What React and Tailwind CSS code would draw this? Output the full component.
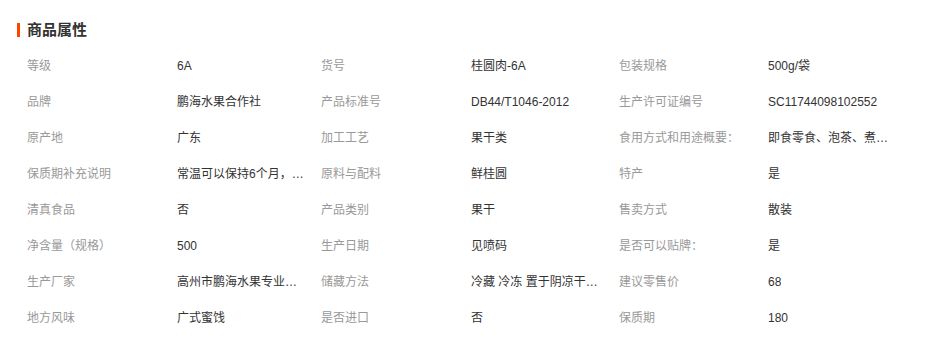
import React from 'react';

const rows = [
  ['等级', '6A', '货号', '桂圆肉-6A', '包装规格', '500g/袋'],
  ['品牌', '鹏海水果合作社', '产品标准号', 'DB44/T1046-2012', '生产许可证编号', 'SC11744098102552'],
  ['原产地', '广东', '加工工艺', '果干类', '食用方式和用途概要：', '即食零食、泡茶、煮粥、煲汤'],
  ['保质期补充说明', '常温可以保持6个月，冷藏可保持一年', '原料与配料', '鲜桂圆', '特产', '是'],
  ['清真食品', '否', '产品类别', '果干', '售卖方式', '散装'],
  ['净含量（规格）', '500', '生产日期', '见喷码', '是否可以贴牌：', '是'],
  ['生产厂家', '高州市鹏海水果专业合作社', '储藏方法', '冷藏 冷冻 置于阴凉干燥处', '建议零售价', '68'],
  ['地方风味', '广式蜜饯', '是否进口', '否', '保质期', '180'],
];

const ProductAttributes = () => {
  return (
    <div
      className="bg-white w-[939px] h-[338px] text-[12px]"
      style={{ fontFamily: '"Liberation Sans", "Noto Sans CJK SC", sans-serif' }}
    >
      <div className="flex items-center pl-[17px] pt-[22px] pb-[10px]">
        <span className="w-[3px] h-[14px] bg-[#ff4400] mr-[7px]" />
        <h2 className="text-[15px] leading-[16px] font-bold text-[#333]">商品属性</h2>
      </div>

      <div className="pl-[27px] grid grid-cols-[150px_144px_150px_148px_149px_1fr]">
        {rows.map((row, i) =>
          row.map((text, j) => (
            <div key={i + '-' + j} className="h-[36px] flex items-center">
              {j % 2 === 0 ? (
                <span className="text-[#999] whitespace-nowrap">{text}</span>
              ) : (
                <span className="text-[#333] max-w-[130px] truncate">{text}</span>
              )}
            </div>
          ))
        )}
      </div>
    </div>
  );
};

export default ProductAttributes;
